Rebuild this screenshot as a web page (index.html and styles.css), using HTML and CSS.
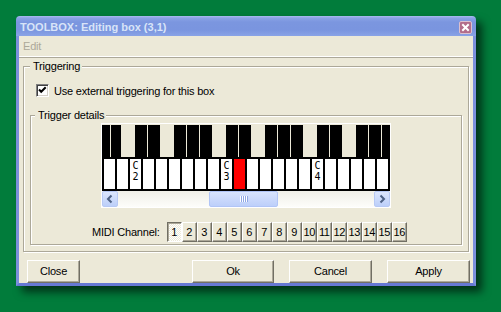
FILE: index.html
```html
<!DOCTYPE html>
<html>
<head>
<meta charset="utf-8">
<title>TOOLBOX</title>
<link rel="stylesheet" href="styles.css">
</head>
<body>
<div class="window">
  <div class="titlebar">
    <span class="title">TOOLBOX: Editing box (3,1)</span>
    <span class="close"><svg width="13" height="13" viewBox="0 0 13 13"><path d="M4 4l5 5M9 4l-5 5" stroke="#fff" stroke-width="2" stroke-linecap="square"/></svg></span>
  </div>
  <div class="frame">
    <div class="menubar"><span class="menu">Edit</span></div>
    <div class="panel">
      <fieldset class="group outer">
        <legend>Triggering</legend>
        <label class="check">
          <span class="box"><svg width="11" height="11" viewBox="0 0 11 11"><path d="M2 4.5l2.2 2.3L8.7 2.3" fill="none" stroke="#000" stroke-width="2"/></svg></span>
          <span>Use external triggering for this box</span>
        </label>
        <fieldset class="group inner">
          <legend>Trigger details</legend>
          <div class="kbd">
            <div class="blackclip">
              <div class="blackrow">
                <span class="bk"></span><span class="bk"></span><span class="nk"></span><span class="bk"></span><span class="bk"></span><span class="nk"></span><span class="bk"></span><span class="bk"></span><span class="bk"></span><span class="nk"></span><span class="bk"></span><span class="bk"></span><span class="nk"></span><span class="bk"></span><span class="bk"></span><span class="bk"></span><span class="nk"></span><span class="bk"></span><span class="bk"></span><span class="nk"></span><span class="bk"></span><span class="bk"></span><span class="bk"></span>
              </div>
            </div>
            <div class="whiterow">
              <span class="wk"></span>
              <span class="wk"></span>
              <span class="wk"><span class="lbl">C<br>2</span></span>
              <span class="wk"></span>
              <span class="wk"></span>
              <span class="wk"></span>
              <span class="wk"></span>
              <span class="wk"></span>
              <span class="wk"></span>
              <span class="wk"><span class="lbl">C<br>3</span></span>
              <span class="wk on"></span>
              <span class="wk"></span>
              <span class="wk"></span>
              <span class="wk"></span>
              <span class="wk"></span>
              <span class="wk"></span>
              <span class="wk"><span class="lbl">C<br>4</span></span>
              <span class="wk"></span>
              <span class="wk"></span>
              <span class="wk"></span>
              <span class="wk"></span>
              <span class="wk last"></span>
            </div>
            <div class="hscroll">
              <span class="sbtn"><svg width="14" height="14" viewBox="0 0 14 14"><path d="M8.5 3.5L5 7l3.5 3.5" fill="none" stroke="#4d6185" stroke-width="2"/></svg></span>
              <span class="track"><span class="thumb"><span class="grip"></span></span></span>
              <span class="sbtn"><svg width="14" height="14" viewBox="0 0 14 14"><path d="M5.5 3.5L9 7l-3.5 3.5" fill="none" stroke="#4d6185" stroke-width="2"/></svg></span>
            </div>
          </div>
          <div class="midi">
            <span class="midilabel">MIDI Channel:</span>
            <div class="chans">
              <span class="ch down">1</span><span class="ch">2</span><span class="ch">3</span><span class="ch">4</span><span class="ch">5</span><span class="ch">6</span><span class="ch">7</span><span class="ch">8</span><span class="ch">9</span><span class="ch">10</span><span class="ch">11</span><span class="ch">12</span><span class="ch">13</span><span class="ch">14</span><span class="ch">15</span><span class="ch">16</span>
            </div>
          </div>
        </fieldset>
      </fieldset>
    </div>
    <div class="buttons">
      <span class="btn close-btn">Close</span>
      <span class="btn ok">Ok</span>
      <span class="btn wide">Cancel</span>
      <span class="btn wide">Apply</span>
    </div>
  </div>
</div>
</body>
</html>
```

FILE: styles.css
```css
html, body {
  margin: 0;
  padding: 0;
}
body {
  width: 501px;
  height: 312px;
  overflow: hidden;
  background: #017c3b;
  font-family: "Liberation Sans", Arial, sans-serif;
  font-size: 11px;
  letter-spacing: -0.2px;
  color: #000;
}
.window {
  margin: 16px 0 0 16px;
  width: 460px;
  height: 270px;
  display: flex;
  flex-direction: column;
  box-shadow: 6px 6px 8px rgba(0, 0, 0, 0.6);
  border-radius: 4px 4px 0 0;
}
.titlebar {
  height: 20px;
  display: flex;
  align-items: flex-start;
  padding: 0 4px;
  border-radius: 4px 4px 0 0;
  background: linear-gradient(#a9bcef 0, #8aa3e5 2px, #7b96df 6px, #7a95df 14px, #89a3e6 20px);
}
.title {
  flex: 1;
  padding-top: 5px;
  line-height: 13px;
  font-weight: bold;
  letter-spacing: 0;
  color: #d8e4f8;
}
.close {
  margin-top: 5px;
  width: 13px;
  height: 13px;
  box-sizing: border-box;
  border: 1px solid #dcc0cf;
  border-radius: 2px;
  background: #b26d8b;
  display: flex;
}
.close svg {
  margin: -1px;
}
.frame {
  flex: 1;
  display: flex;
  flex-direction: column;
  background: #ece9d8;
  border: 3px solid #7b8fdc;
  border-top: 0;
  border-bottom-color: #6678d4;
}
.menubar {
  height: 20px;
  line-height: 20px;
  padding-left: 4px;
  color: #aca899;
  border-bottom: 1px solid #fff;
}
.panel {
  border-top: 1px solid #aca899;
  display: flex;
  flex-direction: column;
}
.group {
  min-width: 0;
  margin: 0;
  border: 1px solid #aca899;
  box-shadow: inset 1px 1px 0 #fff, 1px 1px 0 #fff;
}
.group legend {
  line-height: 13px;
  padding: 0 2px 0 3px;
  background: #ece9d8;
}
.outer {
  margin: 2px 4px 0 4px;
  padding: 0 6px 6px 6px;
}
.inner {
  margin-top: 12px;
  padding: 0 4px 2px 4px;
}
.check {
  margin: 11px 0 0 6px;
  height: 13px;
  display: flex;
  align-items: center;
  gap: 5px;
}
.box {
  width: 13px;
  height: 13px;
  box-sizing: border-box;
  border: 1px solid;
  border-color: #808080 #fff #fff #808080;
  box-shadow: inset 1px 1px 0 #404040, inset -1px -1px 0 #d4d0c8;
  background: #fff;
  display: flex;
}
.kbd {
  width: 288px;
  margin: 1px auto 0 auto;
  border: 1px solid #fff;
  padding-top: 1px;
  background: #ece9d8;
}
.blackclip {
  width: 288px;
  overflow: hidden;
}
.blackrow {
  margin-left: -6px;
  height: 32px;
  display: grid;
  grid-template-columns: 14px 10px repeat(21, 12px);
  column-gap: 1px;
}
.bk {
  background: #000;
}
.whiterow {
  display: flex;
  height: 30px;
  border-top: 2px solid #000;
  border-bottom: 2px solid #000;
}
.wk {
  width: 11px;
  flex: none;
  border-left: 2px solid #000;
  background: #fff;
}
.wk.last {
  border-right: 2px solid #000;
}
.wk.on {
  background: #ff0000;
}
.lbl {
  display: block;
  text-align: center;
  font-family: "DejaVu Sans Mono", "Liberation Mono", monospace;
  font-size: 10px;
  line-height: 11px;
  letter-spacing: 0;
  padding-top: 1px;
}
.hscroll {
  height: 16px;
  display: flex;
  background: linear-gradient(#f0efe8, #fdfdfa);
}
.sbtn {
  width: 16px;
  height: 16px;
  flex: none;
  box-sizing: border-box;
  border: 1px solid #b7c9f5;
  border-radius: 2px;
  background: linear-gradient(#dce6fd, #bccff9);
  display: flex;
  align-items: center;
  justify-content: center;
}
.track {
  flex: 1;
  display: flex;
}
.thumb {
  width: 69px;
  margin-left: 91px;
  height: 16px;
  box-sizing: border-box;
  border: 1px solid #b1c5f7;
  border-radius: 2px;
  background: linear-gradient(#d8e3fd, #bdcffa);
  display: flex;
  align-items: center;
  justify-content: center;
}
.grip {
  width: 8px;
  height: 6px;
  background: repeating-linear-gradient(90deg, #fff 0 1px, #8ea6e6 1px 2px);
}
.midi {
  margin: 14px 0 0 57px;
  height: 20px;
  display: flex;
  align-items: center;
  gap: 7px;
}
.chans {
  display: flex;
}
.ch {
  width: 15px;
  height: 20px;
  box-sizing: border-box;
  border: 1px solid;
  border-color: #fff #716f64 #716f64 #fff;
  box-shadow: inset -1px -1px 0 #aca899;
  text-align: center;
  line-height: 18px;
  letter-spacing: -0.4px;
}
.ch.down {
  border-color: #716f64 #fff #fff #716f64;
  box-shadow: inset 1px 1px 0 #aca899;
  background: repeating-conic-gradient(#fff 0 25%, #ece9d8 0 50%) 0 0 / 2px 2px;
}
.buttons {
  margin-top: auto;
  height: 23px;
  display: flex;
  padding: 0 3px 0 8px;
  gap: 15px;
}
.btn {
  box-sizing: border-box;
  height: 23px;
  border: 1px solid;
  border-color: #fff #716f64 #716f64 #fff;
  box-shadow: inset -1px -1px 0 #aca899;
  text-align: center;
  line-height: 21px;
}
.close-btn {
  width: 53px;
}
.ok {
  width: 82px;
  margin-left: auto;
}
.wide {
  width: 83px;
}
```
